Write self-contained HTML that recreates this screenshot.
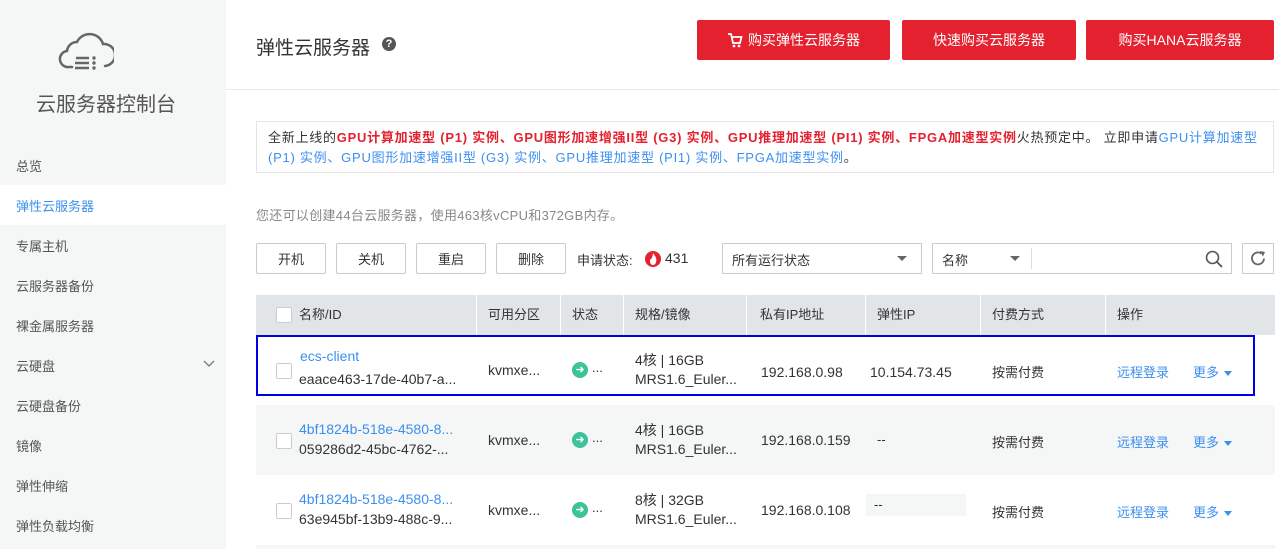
<!DOCTYPE html>
<html><head><meta charset="utf-8"><style>
*{margin:0;padding:0;box-sizing:border-box}
body{width:1279px;height:549px;overflow:hidden;background:#fff;font-family:"Liberation Sans","Noto Sans CJK SC",sans-serif;font-size:13px;color:#333;position:relative}
.a{position:absolute;white-space:nowrap}
.side{position:absolute;left:0;top:0;width:226px;height:549px;background:#f5f7f7}
.nav{position:absolute;left:16px;font-size:13px;color:#555}
.btnr{position:absolute;top:20px;height:40px;background:#e4212f;color:#fff;font-size:14px;display:flex;align-items:center;justify-content:center;border-radius:2px}
.b{position:absolute;top:243px;width:70px;height:31px;border:1px solid #ccc;background:#fff;display:flex;align-items:center;justify-content:center;font-size:13px;border-radius:2px}
.red{color:#e4212f;font-weight:bold}.blue{color:#3c8ff0}
.th{position:absolute;top:295px;height:40px;line-height:40px;font-size:13px;color:#333}
.sep{position:absolute;top:295px;width:1px;height:40px;background:#fff}
.cb{position:absolute;left:276px;width:16px;height:16px;border:1px solid #ccc;background:#fff;border-radius:2px}
.st{position:absolute;left:572px;width:16px;height:16px;border-radius:50%;background:#3cc39a;color:#fff;font-size:11px;line-height:16px;text-align:center}
.tri{display:inline-block;width:0;height:0;border-left:4px solid transparent;border-right:4px solid transparent;border-top:5px solid #3c8ff0;margin-left:5px;vertical-align:middle}
</style></head><body>
<div class="side"></div>
<svg class="a" style="left:58px;top:26px" width="56" height="48" viewBox="0 0 56 48"><path d="M14 41 H11 A8 8 0 0 1 9 25 A10 10 0 0 1 19 16 A14 14 0 0 1 45 18 A11 11 0 0 1 47 40" fill="none" stroke="#666" stroke-width="2.5" stroke-linecap="round"/><path d="M18 32 H31 M17 37 H31 M17 42 H31" stroke="#666" stroke-width="2.5"/><circle cx="36" cy="32" r="1.7" fill="#666"/><circle cx="36" cy="37" r="1.7" fill="#666"/><circle cx="36" cy="42" r="1.7" fill="#666"/></svg>
<div class="a" style="left:36px;top:88px;font-size:20px;color:#555">云服务器控制台</div>
<div class="nav" style="top:156px">总览</div>
<div class="a" style="left:0;top:185px;width:226px;height:40px;background:#fff"></div>
<div class="nav" style="top:196px;color:#3c8ff0">弹性云服务器</div>
<div class="nav" style="top:236px">专属主机</div>
<div class="nav" style="top:276px">云服务器备份</div>
<div class="nav" style="top:316px">裸金属服务器</div>
<div class="nav" style="top:356px">云硬盘</div>
<svg class="a" style="left:203px;top:360px" width="12" height="8"><path d="M1 1 L6 6 L11 1" fill="none" stroke="#777" stroke-width="1.3"/></svg>
<div class="nav" style="top:396px">云硬盘备份</div>
<div class="nav" style="top:436px">镜像</div>
<div class="nav" style="top:476px">弹性伸缩</div>
<div class="nav" style="top:516px">弹性负载均衡</div>

<div class="a" style="left:256px;top:33px;font-size:19px;color:#333">弹性云服务器</div>
<div class="a" style="left:382px;top:37px;width:14px;height:14px;border-radius:50%;background:#555;color:#fff;font-size:11px;font-weight:bold;line-height:14px;text-align:center">?</div>
<div class="btnr" style="left:697px;width:193px"><svg width="16" height="16" style="margin-right:5px"><path d="M1 2 H4 L6 11 H13 L14.5 5 H5" fill="none" stroke="#fff" stroke-width="1.8"/><circle cx="7" cy="14" r="1.4" fill="#fff"/><circle cx="12" cy="14" r="1.4" fill="#fff"/></svg>购买弹性云服务器</div>
<div class="btnr" style="left:902px;width:174px">快速购买云服务器</div>
<div class="btnr" style="left:1086px;width:188px">购买HANA云服务器</div>
<div class="a" style="left:226px;top:89px;width:1053px;height:1px;background:#e8e8e8"></div>

<div class="a" style="left:256px;top:121px;width:1018px;height:52px;border:1px solid #e5e5e5"></div>
<div class="a" style="left:268px;top:128px;font-size:13px;line-height:20px;letter-spacing:0.75px">全新上线的<span class="red">GPU计算加速型 (P1) 实例、GPU图形加速增强II型 (G3) 实例、GPU推理加速型 (PI1) 实例、FPGA加速型实例</span>火热预定中。 立即申请<span class="blue">GPU计算加速型</span><br><span class="blue">(P1) 实例、GPU图形加速增强II型 (G3) 实例、GPU推理加速型 (PI1) 实例、FPGA加速型实例</span>。</div>
<div class="a" style="left:256px;top:205px;color:#888;letter-spacing:0.3px">您还可以创建44台云服务器，使用463核vCPU和372GB内存。</div>

<div class="b" style="left:256px">开机</div>
<div class="b" style="left:336px">关机</div>
<div class="b" style="left:416px">重启</div>
<div class="b" style="left:496px">删除</div>
<div class="a" style="left:577px;top:250px">申请状态:</div>
<svg class="a" style="left:645px;top:250px" width="16" height="18"><circle cx="8" cy="9" r="8" fill="#e4212f"/><path d="M8 3 C11 7 12 9 11 12 A3 3 0 0 1 5 12 C4.5 10 6 8 6.5 9 C7 7 8 5 8 3Z" fill="#fff"/></svg>
<div class="a" style="left:665px;top:250px;font-size:14px">431</div>
<div class="a" style="left:722px;top:243px;width:200px;height:31px;border:1px solid #ccc"></div>
<div class="a" style="left:732px;top:250px">所有运行状态</div>
<div class="a" style="left:897px;top:256px;border-left:5px solid transparent;border-right:5px solid transparent;border-top:5px solid #666"></div>
<div class="a" style="left:932px;top:243px;width:300px;height:31px;border:1px solid #ccc"></div>
<div class="a" style="left:942px;top:250px">名称</div>
<div class="a" style="left:1010px;top:256px;border-left:5px solid transparent;border-right:5px solid transparent;border-top:5px solid #666"></div>
<div class="a" style="left:1031px;top:248px;width:1px;height:21px;background:#ddd"></div>
<svg class="a" style="left:1205px;top:250px" width="18" height="18"><circle cx="7.5" cy="7.5" r="6" fill="none" stroke="#555" stroke-width="1.6"/><path d="M12 12 L17 17" stroke="#555" stroke-width="1.8"/></svg>
<div class="a" style="left:1242px;top:243px;width:32px;height:31px;border:1px solid #ccc"></div>
<svg class="a" style="left:1250px;top:250px" width="17" height="17"><path d="M14 8.5 A6 6 0 1 1 11.5 3.5" fill="none" stroke="#666" stroke-width="1.8"/><path d="M10 1 L15 2 L13 6.5 Z" fill="#666"/></svg>

<div class="a" style="left:256px;top:295px;width:1019px;height:40px;background:#e2e5e7"></div>
<div class="sep" style="left:476px"></div><div class="sep" style="left:560px"></div><div class="sep" style="left:623px"></div><div class="sep" style="left:746px"></div><div class="sep" style="left:865px"></div><div class="sep" style="left:980px"></div><div class="sep" style="left:1105px"></div>
<div class="cb" style="top:307px"></div>
<div class="th" style="left:299px">名称/ID</div><div class="th" style="left:488px">可用分区</div><div class="th" style="left:572px">状态</div><div class="th" style="left:635px">规格/镜像</div><div class="th" style="left:760px">私有IP地址</div><div class="th" style="left:877px">弹性IP</div><div class="th" style="left:992px">付费方式</div><div class="th" style="left:1117px">操作</div>

<div class="a" style="left:256px;top:405px;width:1019px;height:70px;background:#f5f6f6"></div>
<div class="a" style="left:256px;top:545px;width:1019px;height:4px;background:#f5f6f6"></div>
<div class="a" style="left:866px;top:494px;width:100px;height:22px;background:#f5f6f6"></div>
<div class="a" style="left:256px;top:335px;width:999px;height:61px;border:2px solid #0000e6"></div>

<div class="cb" style="top:363px"></div>
<div class="a blue" style="left:300px;top:348px;font-size:14px">ecs-client</div>
<div class="a" style="left:299px;top:371px;font-size:14px">eaace463-17de-40b7-a...</div>
<div class="a" style="left:488px;top:362px;font-size:14px">kvmxe...</div>
<div class="st" style="top:362px">➜</div><div class="a" style="left:592px;top:360px">...</div>
<div class="a" style="left:635px;top:350px;font-size:14px">4核 | 16GB</div>
<div class="a" style="left:635px;top:371px;font-size:14px">MRS1.6_Euler...</div>
<div class="a" style="left:761px;top:364px;font-size:14px">192.168.0.98</div>
<div class="a" style="left:870px;top:364px;font-size:14px">10.154.73.45</div>
<div class="a" style="left:992px;top:362px">按需付费</div>
<div class="a blue" style="left:1117px;top:362px">远程登录</div>
<div class="a blue" style="left:1193px;top:362px">更多<span class="tri"></span></div>

<div class="cb" style="top:433px"></div>
<div class="a blue" style="left:299px;top:421px;font-size:14px">4bf1824b-518e-4580-8...</div>
<div class="a" style="left:299px;top:441px;font-size:14px">059286d2-45bc-4762-...</div>
<div class="a" style="left:488px;top:432px;font-size:14px">kvmxe...</div>
<div class="st" style="top:432px">➜</div><div class="a" style="left:592px;top:430px">...</div>
<div class="a" style="left:635px;top:420px;font-size:14px">4核 | 16GB</div>
<div class="a" style="left:635px;top:441px;font-size:14px">MRS1.6_Euler...</div>
<div class="a" style="left:761px;top:432px;font-size:14px">192.168.0.159</div>
<div class="a" style="left:877px;top:432px">--</div>
<div class="a" style="left:992px;top:432px">按需付费</div>
<div class="a blue" style="left:1117px;top:432px">远程登录</div>
<div class="a blue" style="left:1193px;top:432px">更多<span class="tri"></span></div>

<div class="cb" style="top:503px"></div>
<div class="a blue" style="left:299px;top:491px;font-size:14px">4bf1824b-518e-4580-8...</div>
<div class="a" style="left:299px;top:511px;font-size:14px">63e945bf-13b9-488c-9...</div>
<div class="a" style="left:488px;top:502px;font-size:14px">kvmxe...</div>
<div class="st" style="top:502px">➜</div><div class="a" style="left:592px;top:500px">...</div>
<div class="a" style="left:635px;top:490px;font-size:14px">8核 | 32GB</div>
<div class="a" style="left:635px;top:511px;font-size:14px">MRS1.6_Euler...</div>
<div class="a" style="left:761px;top:502px;font-size:14px">192.168.0.108</div>
<div class="a" style="left:874px;top:497px">--</div>
<div class="a" style="left:992px;top:502px">按需付费</div>
<div class="a blue" style="left:1117px;top:502px">远程登录</div>
<div class="a blue" style="left:1193px;top:502px">更多<span class="tri"></span></div>
</body></html>
